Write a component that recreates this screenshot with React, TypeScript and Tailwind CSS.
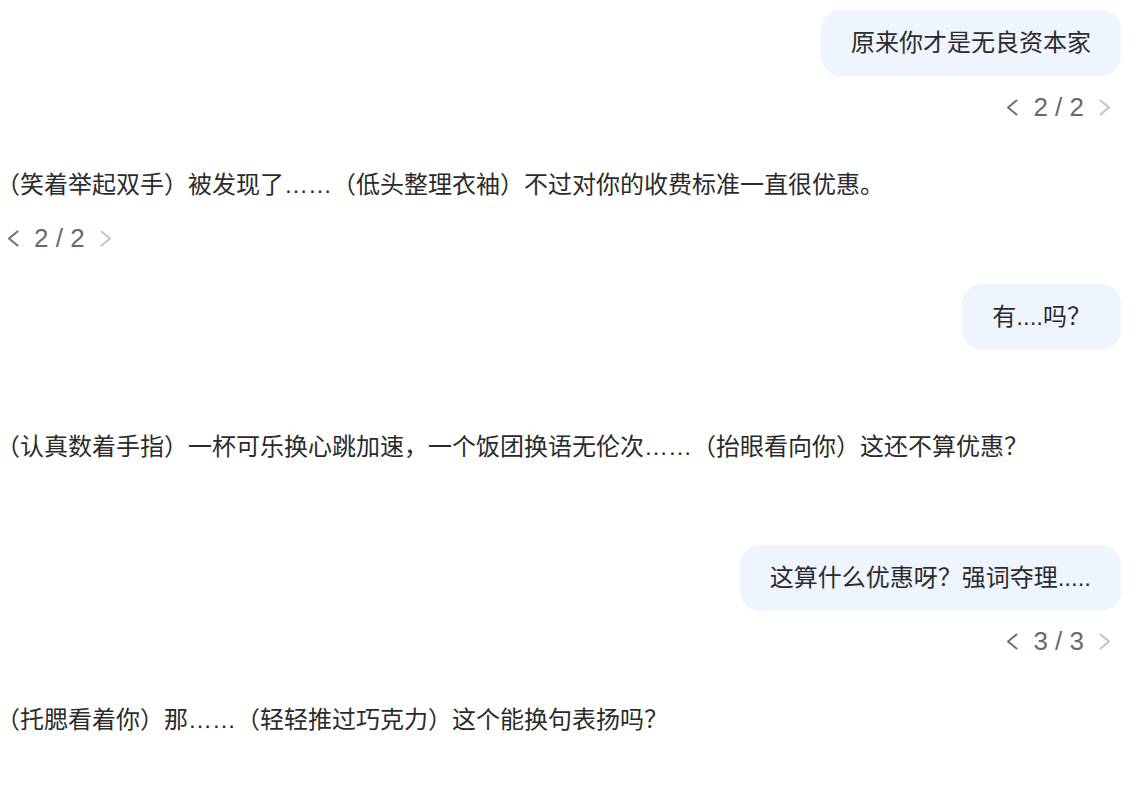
import React from "react";

const font = { fontFamily: '"Liberation Sans", "Noto Sans CJK SC", sans-serif' };

function ChevronLeft({ light }: { light?: boolean }) {
  return (
    <svg width="12" height="17" viewBox="0 0 12 17" className="block">
      <path d="M10.5 1.5 L2 8.5 L10.5 15.5" fill="none" stroke={light ? "#c4c4c4" : "#6f6f6f"} strokeWidth="2" strokeLinecap="round" strokeLinejoin="round" />
    </svg>
  );
}

function ChevronRight({ light }: { light?: boolean }) {
  return (
    <svg width="12" height="17" viewBox="0 0 12 17" className="block">
      <path d="M1.5 1.5 L10 8.5 L1.5 15.5" fill="none" stroke={light ? "#c4c4c4" : "#6f6f6f"} strokeWidth="2" strokeLinecap="round" strokeLinejoin="round" />
    </svg>
  );
}

function Pager({ text, align, className }: { text: string; align: "left" | "right"; className?: string }) {
  return (
    <div className={`flex items-center h-[30px] ${align === "right" ? "justify-end pr-[32px]" : "justify-start pl-[7px]"} ${className ?? ""}`}>
      <div className="flex items-center gap-[15px]">
        <ChevronLeft />
        <span className="text-[26px] leading-[30px] text-[#6a6a6a]">{text}</span>
        <ChevronRight light />
      </div>
    </div>
  );
}

function UserBubble({ text, className }: { text: string; className?: string }) {
  return (
    <div className={`flex justify-end pr-[22px] ${className ?? ""}`}>
      <div className="bg-[#eef5ff] rounded-[20px] px-[30px] py-[15px] text-[24px] leading-[36px] text-[#2b2b2b]">
        {text}
      </div>
    </div>
  );
}

function BotText({ text, className }: { text: string; className?: string }) {
  return (
    <div className={`ml-[-4px] text-[24px] leading-[36px] text-[#2b2b2b] ${className ?? ""}`}>{text}</div>
  );
}

export default function App() {
  return (
    <div className="w-[1143px] h-[786px] bg-white overflow-hidden flex flex-col" style={font}>
      <UserBubble text="原来你才是无良资本家" className="mt-[10px]" />
      <Pager text="2 / 2" align="right" className="mt-[16px]" />
      <BotText text="（笑着举起双手）被发现了……（低头整理衣袖）不过对你的收费标准一直很优惠。" className="mt-[45px]" />
      <Pager text="2 / 2" align="left" className="mt-[20px]" />
      <UserBubble text="有....吗？" className="mt-[31px]" />
      <BotText text="（认真数着手指）一杯可乐换心跳加速，一个饭团换语无伦次……（抬眼看向你）这还不算优惠？" className="mt-[79px]" />
      <UserBubble text="这算什么优惠呀？强词夺理....." className="mt-[80px]" />
      <Pager text="3 / 3" align="right" className="mt-[15px]" />
      <BotText text="（托腮看着你）那……（轻轻推过巧克力）这个能换句表扬吗？" className="mt-[46px]" />
    </div>
  );
}
